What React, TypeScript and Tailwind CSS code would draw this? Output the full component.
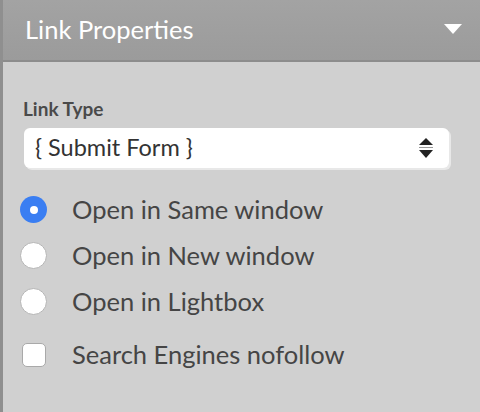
import { useState } from "react";

const targets = [
  { key: "same", label: "Open in Same window" },
  { key: "new", label: "Open in New window" },
  { key: "lightbox", label: "Open in Lightbox" },
];

export default function App() {
  const [target, setTarget] = useState("same");
  const [nofollow, setNofollow] = useState(false);

  return (
    <div className="w-[480px] h-[412px] overflow-hidden bg-[#d0d0d0] border-l-[3px] border-[#8f8f8f] font-['Lato','Open_Sans',sans-serif]">
      {/* panel header */}
      <div className="h-[62px] flex items-center justify-between pl-[22px] pr-[18px] bg-gradient-to-b from-[#a3a3a3] to-[#9b9b9b] border-b-2 border-[#8c8c8c]">
        <h2 className="text-white text-[25.5px] leading-none">Link Properties</h2>
        <svg width="18" height="11" viewBox="0 0 18 11" className="mt-[-2px]">
          <path d="M0 0 H18 L9 10 Z" fill="#fff" />
        </svg>
      </div>

      <div className="pl-[17px] pr-[31px] pt-[37px]">
        <label className="block text-[#4a4a4a] text-[19px] font-bold leading-none pl-[3px]">Link Type</label>
        <div className="mt-[10px] ml-[4px] h-[40px] flex items-center justify-between bg-white rounded-[6px] shadow-[2px_2px_0_#e8e8e8] pl-[11px] pr-[16px]">
          <span className="text-[#333] text-[23.5px] leading-none">{"{ Submit Form }"}</span>
          <svg width="14" height="22" viewBox="0 0 14 22">
            <path d="M7 1 L14 8 H0 Z" fill="#222" />
            <path d="M0 10 H14 V11 H0 Z" fill="#999" />
            <path d="M0 13 H14 L7 21 Z" fill="#222" />
          </svg>
        </div>

        <div className="mt-[28px] flex flex-col gap-[19px]">
          {targets.map((t) => (
            <button
              key={t.key}
              onClick={() => setTarget(t.key)}
              className="flex items-center gap-[25px] text-left"
            >
              {target === t.key ? (
                <span className="w-[27px] h-[27px] rounded-full bg-[#3a7ef2] flex items-center justify-center shrink-0">
                  <span className="w-[8px] h-[8px] rounded-full bg-white" />
                </span>
              ) : (
                <span className="w-[27px] h-[27px] rounded-full bg-white border border-[#b5b5b5] shrink-0" />
              )}
              <span className="text-[#454545] text-[25.5px] leading-[27px]">{t.label}</span>
            </button>
          ))}

          <button onClick={() => setNofollow(!nofollow)} className="flex items-center gap-[26px] text-left mt-[7px]">
            <span className="ml-[2px] w-[24px] h-[24px] rounded-[5px] bg-white border border-[#a9a9a9] shrink-0 flex items-center justify-center text-[#3a7ef2] text-[16px]">
              {nofollow ? "✓" : ""}
            </span>
            <span className="text-[#454545] text-[25.5px] leading-[27px]">Search Engines nofollow</span>
          </button>
        </div>
      </div>
    </div>
  );
}
